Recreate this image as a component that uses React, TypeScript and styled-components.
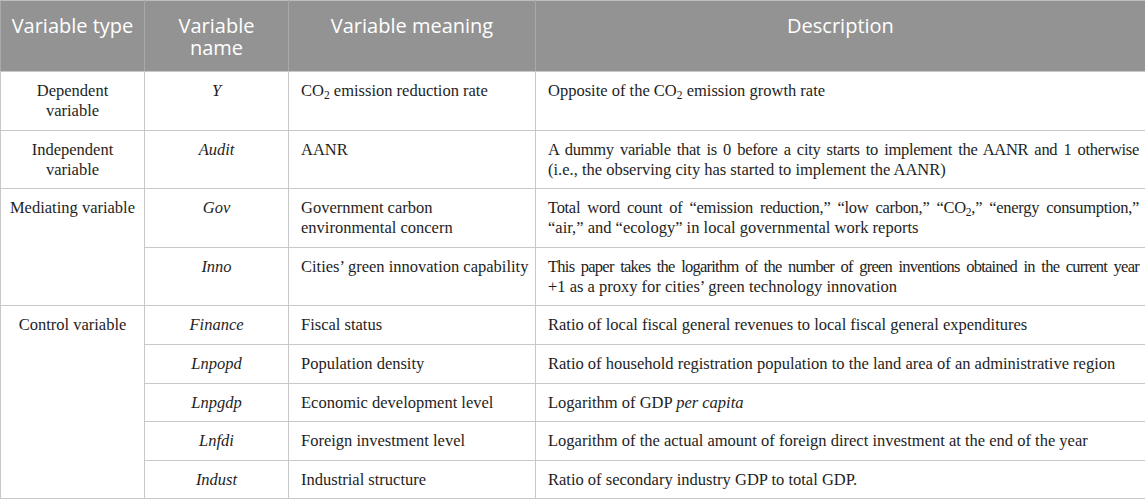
import React from 'react';
import styled, { createGlobalStyle } from 'styled-components';

const GlobalStyle = createGlobalStyle`
	html, body {
		margin: 0;
		padding: 0;
		background: #ffffff;
	}
`;

const Table = styled.table`
	width: 1145px;
	border-collapse: collapse;
	table-layout: fixed;
	font-family: 'Liberation Serif', 'Times New Roman', serif;
	font-size: 16.5px;
	line-height: 20px;
	color: #1e1e1e;
`;

const Col = styled.col<{ $w: number }>`
	width: ${(p) => p.$w}px;
`;

const HeadCell = styled.th`
	background: #939393;
	color: #ffffff;
	font-family: 'Open Sans', 'Noto Sans', sans-serif;
	font-weight: 400;
	font-size: 20px;
	line-height: 22px;
	text-align: center;
	vertical-align: top;
	padding: 14px 6px 12px;
	border: 1px solid #a9a9a9;
	border-bottom-color: #c8c8c8;
	border-top-color: #bdbdbd;
`;

const Cell = styled.td<{ $center?: boolean; $italic?: boolean }>`
	text-align: ${(p) => (p.$center ? 'center' : 'left')};
	font-style: ${(p) => (p.$italic ? 'italic' : 'normal')};
	vertical-align: top;
	white-space: nowrap;
	padding: ${(p) => (p.$center ? '9px 4px 8.6px' : '9px 6px 8.6px 12px')};
	border: 1px solid #c8c8c8;
`;

const Line = styled.span<{ $justify?: boolean; $tight?: number }>`
	display: block;
	text-align: ${(p) => (p.$justify ? 'justify' : 'inherit')};
	text-align-last: ${(p) => (p.$justify ? 'justify' : 'auto')};
	white-space: ${(p) => (p.$justify ? 'normal' : 'nowrap')};
	letter-spacing: ${(p) => (p.$tight ? `-${p.$tight}px` : 'normal')};
`;

const Sub = styled.sub`
	font-size: 0.7em;
	line-height: 0;
	vertical-align: -0.25em;
`;

const CO2 = () => (
	<>
		CO<Sub>2</Sub>
	</>
);

const App = () => {
	return (
		<>
			<GlobalStyle />
			<Table>
				<colgroup>
					<Col $w={144} />
					<Col $w={144} />
					<Col $w={247} />
					<Col $w={610} />
				</colgroup>
				<thead>
					<tr>
						<HeadCell>Variable type</HeadCell>
						<HeadCell>
							Variable
							<br />
							name
						</HeadCell>
						<HeadCell>Variable meaning</HeadCell>
						<HeadCell>Description</HeadCell>
					</tr>
				</thead>
				<tbody>
					<tr>
						<Cell $center>
							Dependent
							<br />
							variable
						</Cell>
						<Cell $center $italic>Y</Cell>
						<Cell>
							<CO2 /> emission reduction rate
						</Cell>
						<Cell>
							Opposite of the <CO2 /> emission growth rate
						</Cell>
					</tr>
					<tr>
						<Cell $center>
							Independent
							<br />
							variable
						</Cell>
						<Cell $center $italic>Audit</Cell>
						<Cell>AANR</Cell>
						<Cell>
							<Line $justify $tight={0.3}>
								A dummy variable that is 0 before a city starts to implement the AANR and 1 otherwise
							</Line>
							<Line>(i.e., the observing city has started to implement the AANR)</Line>
						</Cell>
					</tr>
					<tr>
						<Cell $center rowSpan={2}>
							Mediating variable
						</Cell>
						<Cell $center $italic>Gov</Cell>
						<Cell>
							<Line>Government carbon</Line>
							<Line>environmental concern</Line>
						</Cell>
						<Cell>
							<Line $justify $tight={0.3}>
								Total word count of “emission reduction,” “low carbon,” “<CO2 />,” “energy consumption,”
							</Line>
							<Line>“air,” and “ecology” in local governmental work reports</Line>
						</Cell>
					</tr>
					<tr>
						<Cell $center $italic>Inno</Cell>
						<Cell>Cities’ green innovation capability</Cell>
						<Cell>
							<Line $justify $tight={0.75}>
								This paper takes the logarithm of the number of green inventions obtained in the current year
							</Line>
							<Line>+1 as a proxy for cities’ green technology innovation</Line>
						</Cell>
					</tr>
					<tr>
						<Cell $center rowSpan={5}>
							Control variable
						</Cell>
						<Cell $center $italic>Finance</Cell>
						<Cell>Fiscal status</Cell>
						<Cell>Ratio of local fiscal general revenues to local fiscal general expenditures</Cell>
					</tr>
					<tr>
						<Cell $center $italic>Lnpopd</Cell>
						<Cell>Population density</Cell>
						<Cell>
							Ratio of household registration population to the land area of an administrative region
						</Cell>
					</tr>
					<tr>
						<Cell $center $italic>Lnpgdp</Cell>
						<Cell>Economic development level</Cell>
						<Cell>
							Logarithm of GDP <i>per capita</i>
						</Cell>
					</tr>
					<tr>
						<Cell $center $italic>Lnfdi</Cell>
						<Cell>Foreign investment level</Cell>
						<Cell>Logarithm of the actual amount of foreign direct investment at the end of the year</Cell>
					</tr>
					<tr>
						<Cell $center $italic>Indust</Cell>
						<Cell>Industrial structure</Cell>
						<Cell>Ratio of secondary industry GDP to total GDP.</Cell>
					</tr>
				</tbody>
			</Table>
		</>
	);
};

export default App;
